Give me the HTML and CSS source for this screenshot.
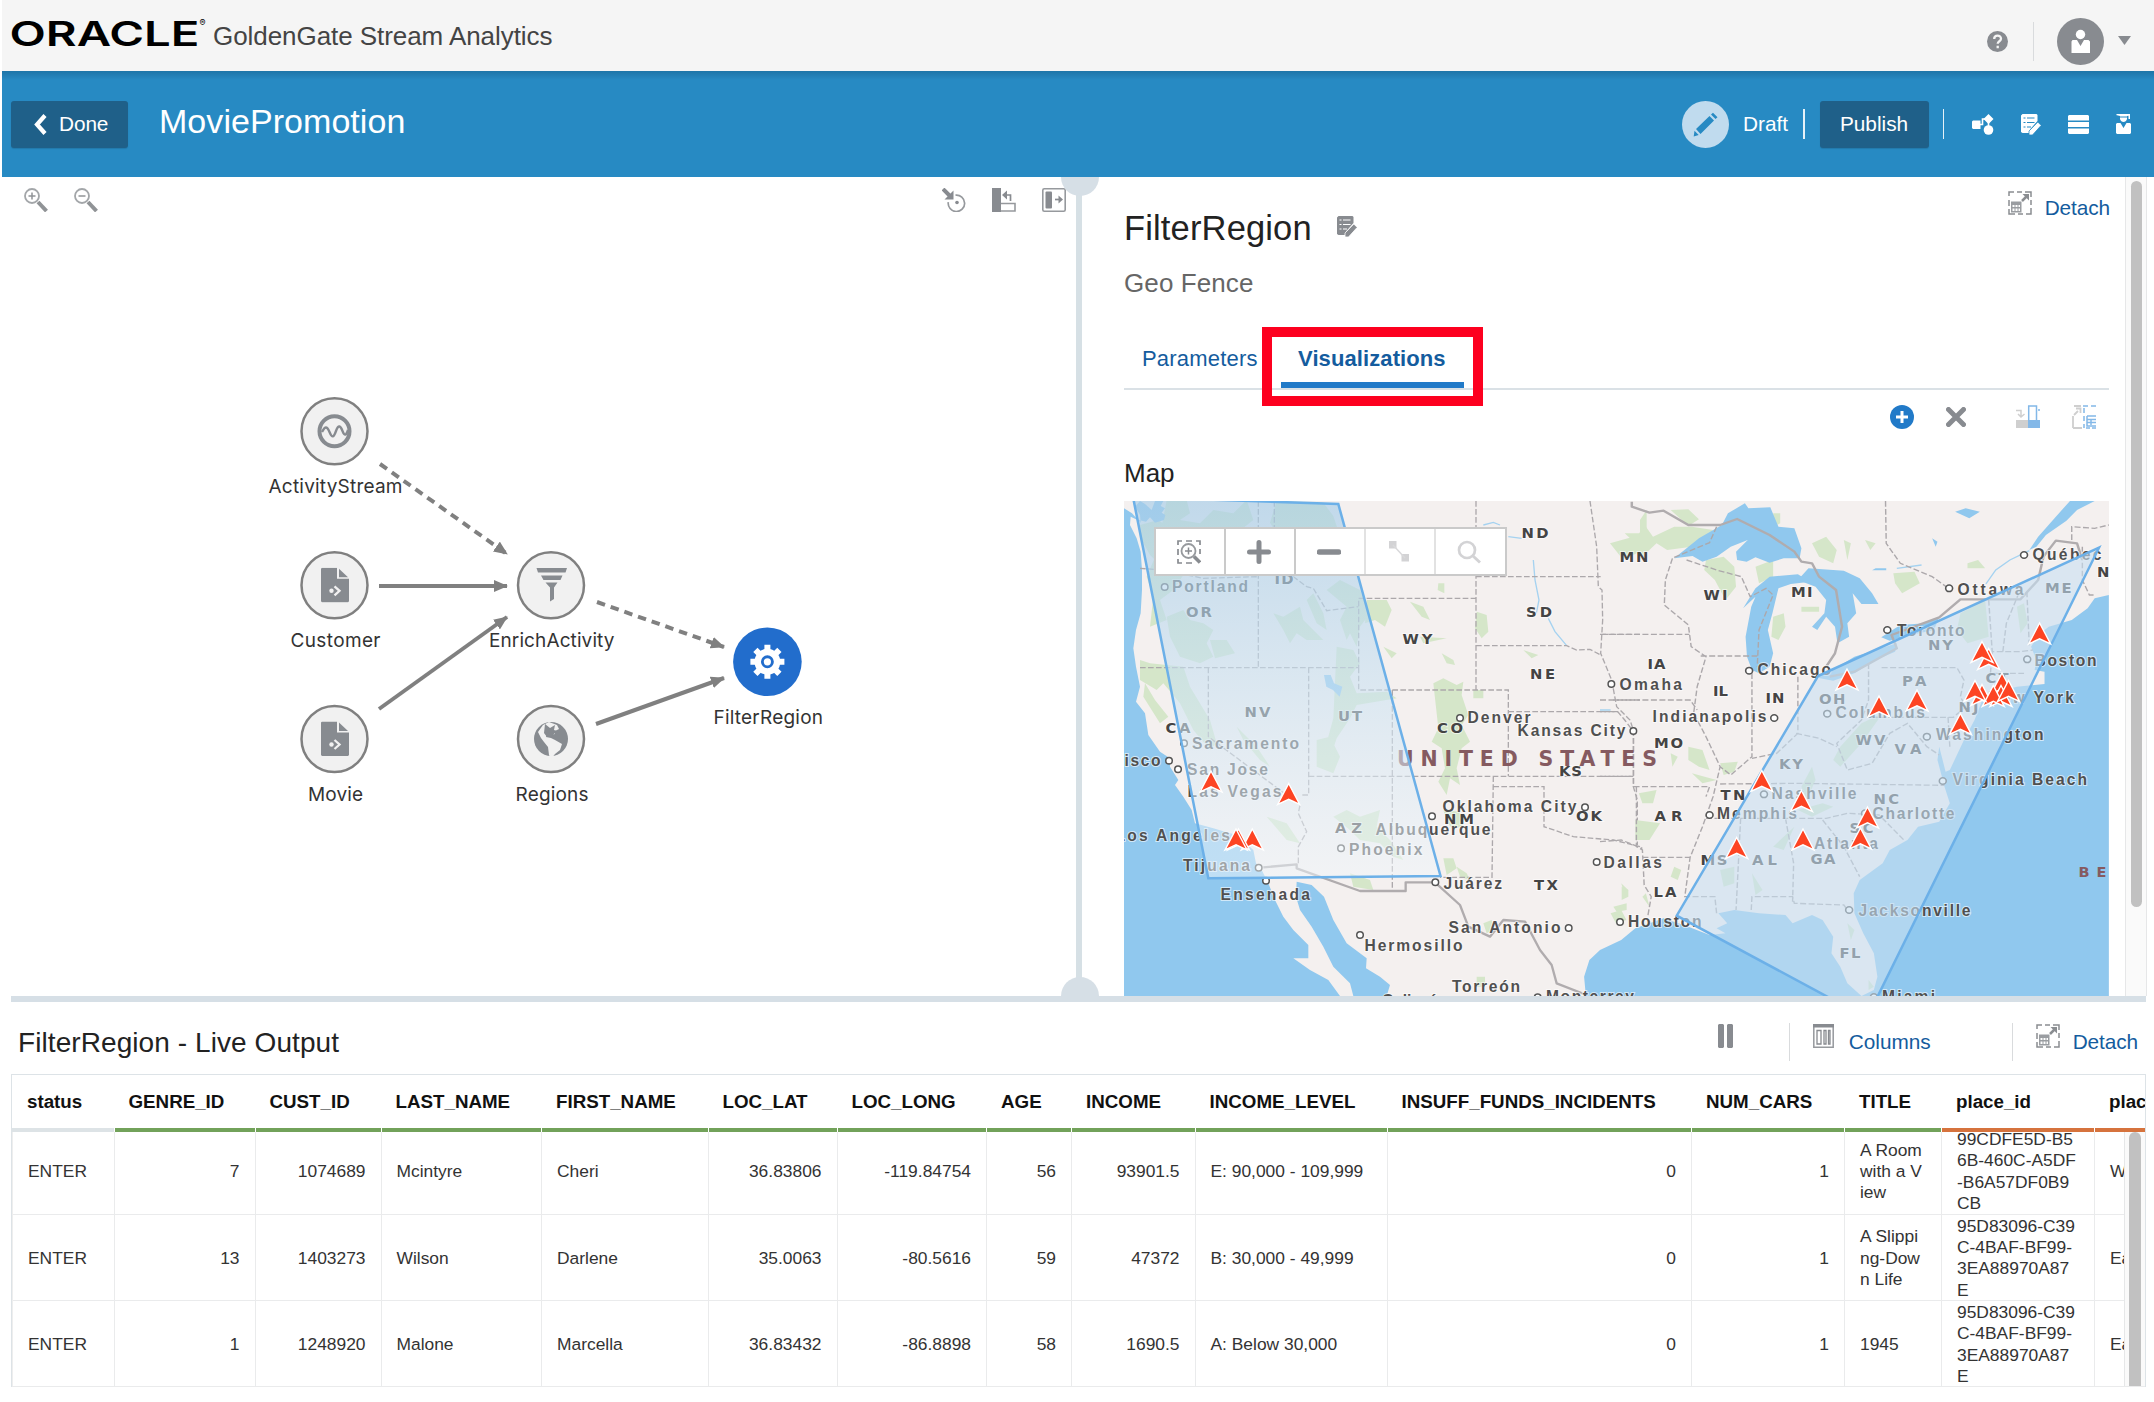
FILE: index.html
```html
<!DOCTYPE html>
<html lang="en">
<head>
<meta charset="utf-8">
<title>MoviePromotion - GoldenGate Stream Analytics</title>
<link rel="stylesheet" href="styles.css">
</head>
<body>
<svg class="defs" width="0" height="0">
  <defs>
    <symbol id="detach" viewBox="0 0 24 24">
      <path d="M1 5V1h5M9 1h5M17 1h6v5M23 9v5M23 17v6h-5M15 23h-5M7 23H1v-5M1 15V9" fill="none" stroke="#8a8d91" stroke-width="1.5"/>
      <path d="M3 10.500h10.500v11H3zM4.500 14v2h2v-2zM7.500 14v2h2v-2zM10.500 14v2h1.500v-2zM4.500 17.500v2.500h2v-2.500zM7.500 17.500v2.500h2v-2.500zM10.500 17.500v2.500h1.500v-2.500z" fill="#9a9da1" fill-rule="evenodd"/>
      <path d="M14 10l5-5" fill="none" stroke="#8a8d91" stroke-width="2.500"/><path d="M14.500 3h6.500v6.500z" fill="#8a8d91"/>
    </symbol>
    <symbol id="edit-list" viewBox="0 0 20 21">
      <path d="M1.500 0h14l1 1v6L9 15.500V19H1.500l-1.500-1V1.500z" fill="currentColor"/>
      <path d="M2.500 4h2M6 4h7.500M2.500 8.500h2M6 8.500h7.500M2.500 13h2M6 13h4" stroke="var(--gap)" stroke-width="1.200"/>
      <path d="M8 21v-4L16.800 8l3.400 3.400L11.500 21z" fill="currentColor" stroke="var(--gap)" stroke-width=".8"/>
    </symbol>
    <symbol id="file" viewBox="0 0 28 35">
      <path d="M1 0h15v11h12v22.500L27 34.500H1L0 33.500V1z" fill="#878b90"/>
      <path d="M18 1v8.500h9z" fill="#878b90"/>
      <circle cx="10.500" cy="23" r="2.200" fill="#f1f1f1"/>
      <path d="M13.500 18.500l5 4.500-5 4.500" fill="none" stroke="#f1f1f1" stroke-width="2.300"/>
    </symbol>
    <path id="pin" d="M0-10.500L11 10.500L0 5.300L-11 10.500Z" fill="#fd4423" stroke="#fff" stroke-width="1.400"/>
    <marker id="arrow" markerUnits="userSpaceOnUse" markerWidth="14" markerHeight="12" refX="13" refY="6" orient="auto"><path d="M0 0l14 6-14 6z" fill="#808080"/></marker>
    <linearGradient id="fence-west" x1="0" y1="0" x2="0" y2="1">
      <stop offset="0" stop-color="#a8cde8" stop-opacity=".68"/>
      <stop offset=".5" stop-color="#cbe2f2" stop-opacity=".6"/>
      <stop offset="1" stop-color="#f0f6fb" stop-opacity=".5"/>
    </linearGradient>
  </defs>
</svg>

<header class="brand-bar">
  <svg class="oracle" width="196" height="34" viewBox="0 0 196 34"><text x="-1.500" y="29" textLength="190" lengthAdjust="spacingAndGlyphs">ORACLE</text><text class="reg" x="188.500" y="9">®</text></svg>
  <h1 class="product">GoldenGate Stream Analytics</h1>
  <div class="user-tools">
    <svg width="21" height="21" viewBox="0 0 21 21"><circle cx="10.500" cy="10.500" r="10.500" fill="#888b90"/><path d="M7.200 8c0-4.500 6.800-4.300 6.800-.3 0 2.600-3.300 2.400-3.300 5M10.700 14.700v2.500" fill="none" stroke="#f5f5f5" stroke-width="2.300"/></svg>
    <i class="rule"></i>
    <svg width="47" height="47" viewBox="0 0 47 47"><circle cx="23.500" cy="23.500" r="23.500" fill="#888b90"/><circle cx="23.500" cy="16.500" r="4.700" fill="#fff"/><path d="M15.500 22h4.500l3.500 6 3.500-6h4.500l1.500 1.500V35H14.500V23.500z" fill="#fff"/></svg>
    <svg class="caret" width="13" height="9" viewBox="0 0 13 9"><path d="M0 0h13L6.500 9z" fill="#888b90"/></svg>
  </div>
</header>

<section class="title-bar">
  <button class="btn done"><svg width="14" height="21" viewBox="0 0 14 21"><path d="M12 1.500L4 10.500l8 9" fill="none" stroke="#fff" stroke-width="4.200"/></svg>Done</button>
  <h2 class="pipeline">MoviePromotion</h2>
  <div class="actions">
    <svg width="47" height="47" viewBox="0 0 47 47"><circle cx="23.500" cy="23.500" r="23.500" fill="#c0dbee"/><path d="M14 28L27.500 15l4.500 4.500L18.500 33z M29 13.500l2-1.800 4.500 4.500-2 1.800z M12.500 29.700l4.200 4.200-5 1.600z" fill="#278ac3"/></svg>
    <span class="draft">Draft</span>
    <i class="rule light"></i>
    <button class="btn publish">Publish</button>
    <i class="rule light"></i>
    <div class="glyphs">
      <svg width="22" height="21" viewBox="0 0 22 21"><path d="M1 6.500h7.500V15H1L0 14V7.500z M16.500 0l5 5-5 5-5-5z" fill="#fff"/><circle cx="16.500" cy="16" r="4.800" fill="#fff"/><path d="M8 10.500h2.500V5h3M16.500 8v5" fill="none" stroke="#fff" stroke-width="1.600"/></svg>
      <svg class="on-blue" width="20" height="21"><use href="#edit-list"/></svg>
      <svg width="21" height="19" viewBox="0 0 21 19"><path d="M1 0h19l1 1v4.500H0V1zM0 7h21v5H0zM0 13.500h21V18l-1 1H1l-1-1z" fill="#fff"/></svg>
      <svg width="15" height="20" viewBox="0 0 15 20"><path d="M0 1l1-1h13v5h-1.500V1.800L11 2v3c-1 4-6 4-7 0V2z" fill="#fff"/><path d="M1 9h3.500l3 5 3-5H14l1 1v9l-1 1H1l-1-1v-9z" fill="#fff"/><path d="M3.500 3h8" stroke="#278ac3"/></svg>
    </div>
  </div>
</section>

<main class="workspace">
  <section class="canvas">
    <div class="canvas-tools">
      <svg width="24" height="24" viewBox="0 0 24 24"><circle cx="8" cy="8" r="7" fill="none" stroke="#a3a6a9" stroke-width="1.800"/><path d="M8 4.500v7M4.500 8h7" stroke="#909396" stroke-width="1.500"/><path d="M14 14l8.500 9" stroke="#909396" stroke-width="4"/></svg>
      <svg width="24" height="24" viewBox="0 0 24 24"><circle cx="8" cy="8" r="7" fill="none" stroke="#a3a6a9" stroke-width="1.800"/><path d="M4.500 8h7" stroke="#909396" stroke-width="1.500"/><path d="M14 14l8.500 9" stroke="#909396" stroke-width="4"/></svg>
      <span class="spacer"></span>
      <svg width="24" height="24" viewBox="0 0 24 24"><path d="M1 1l7 7" stroke="#888b90" stroke-width="4"/><path d="M11.500 2.500V11.500H2.500z" fill="#888b90"/><path d="M13.500 7.200a8.200 8.200 0 1 1-7.200 7" fill="none" stroke="#96999d" stroke-width="1.700"/><circle cx="15" cy="14.500" r="1.800" fill="#888b90"/></svg>
      <svg width="24" height="24" viewBox="0 0 24 24"><path d="M0 0h9v24H0z" fill="#888b90"/><path d="M9 15.500h14V23H9" fill="none" stroke="#96999d" stroke-width="1.600"/><path d="M12 7h6.500v6" fill="none" stroke="#888b90" stroke-width="1.700"/><path d="M10 7l5-4.500v9z" fill="#888b90"/></svg>
      <svg width="24" height="24" viewBox="0 0 24 24"><rect x=".8" y=".8" width="22.400" height="22.400" rx="1.500" fill="none" stroke="#96999d" stroke-width="1.600"/><rect x="3.500" y="3.500" width="6.500" height="17" rx="1" fill="#888b90"/><path d="M13 11.500h5" fill="none" stroke="#888b90" stroke-width="1.700"/><path d="M16.500 7.500l4.500 4-4.500 4z" fill="#888b90"/></svg>
    </div>
    <svg class="diagram" width="640" height="420" viewBox="240 390 640 420">
      <g class="edge">
        <path class="dash" d="M380 464L507 554"/><path d="M379 586H507"/><path d="M379 709L507 617"/>
        <path class="dash" d="M597 602L724 647"/><path d="M596 724L724 678"/>
      </g>
      <g class="node"><circle cx="334.500" cy="431.300" r="33"/><circle cx="334.500" cy="585.300" r="33"/><circle cx="334.500" cy="739" r="33"/><circle cx="551" cy="585.300" r="33"/><circle cx="551" cy="739" r="33"/></g>
      <circle cx="767.400" cy="661.800" r="34.300" fill="#226dcc"/>
      <circle cx="334.500" cy="431.300" r="15" fill="none" stroke="#878b90" stroke-width="4"/>
      <path d="M322 432c3-6 5-6 7.500 0s4 6 6.500-1 4.500-5 6.500 0 3.500 5 5.500-1" fill="none" stroke="#878b90" stroke-width="2.400"/>
      <use href="#file" x="321" y="567.800" width="28" height="35"/>
      <use href="#file" x="321" y="721.500" width="28" height="35"/>
      <path d="M536.500 568h30.500l-1.500 4.500h-27.500zM541 575.500h21.500l-2 4.500h-17zM545.500 582.500h12l-3.500 5V599l-4 2.500v-14z" fill="#878b90"/>
      <circle cx="551" cy="739" r="17" fill="#878b90"/>
      <path d="M543 725l6-3 8 3 2 4-4 2v3l-5 1-3-2-1 4 5 1 4 2 7 4-2 6-5 4-4 5-2-4-1-8-4-5-3-4-3-6z" fill="#f1f1f1"/>
      <path d="M545 724l5 4 5-3-1 5 3 1-5 5-5 1-3-4z" fill="#878b90"/>
      <g fill="none" stroke="#fff"><circle cx="767.400" cy="661.800" r="9.700" stroke-width="6.500"/><path d="M767.400 644.800v5M767.400 673.800v5M750.400 661.800h5M779.400 661.800h5M755.400 649.800l3.500 3.500M775.900 670.300l3.500 3.500M755.400 673.800l3.500-3.500M775.900 653.300l3.500-3.500" stroke-width="6"/></g>
      <circle cx="767.400" cy="661.800" r="3.600" fill="#fff"/>
      <g class="node-label">
        <text x="268.500" y="492.500" textLength="134">ActivityStream</text><text x="290.500" y="646.500" textLength="90">Customer</text><text x="308" y="800.500" textLength="55">Movie</text>
        <text x="489" y="646.500" textLength="125.500">EnrichActivity</text><text x="515.500" y="800.500" textLength="73">Regions</text><text x="713.500" y="723.500" textLength="109.500">FilterRegion</text>
      </g>
    </svg>
  </section>

  <div class="splitter"><i class="grip top"></i><i class="grip bottom"></i></div>

  <section class="details">
    <div class="head">
      <div>
        <h3 class="stage">FilterRegion <svg class="on-white" width="20" height="21"><use href="#edit-list"/></svg></h3>
        <p class="kind">Geo Fence</p>
      </div>
      <a class="link detach"><svg width="24" height="24"><use href="#detach"/></svg>Detach</a>
    </div>
    <nav class="tabs">
      <a class="tab first">Parameters</a>
      <a class="tab active">Visualizations</a>
      <i class="callout"></i>
    </nav>
    <div class="viz-tools">
      <svg width="24" height="24" viewBox="0 0 24 24"><circle cx="12" cy="12" r="12" fill="#217ac8"/><path d="M12 6v12M6 12h12" stroke="#fff" stroke-width="3"/></svg>
      <svg class="remove" width="20" height="20" viewBox="0 0 20 20"><path d="M2.500 2.500l15 15M17.500 2.500l-15 15" stroke="#888b90" stroke-width="5" stroke-linecap="round"/></svg>
      <svg class="merge" width="24" height="24" viewBox="0 0 24 24"><path d="M0 15h12v8H0z" fill="#cfcfcf"/><path d="M12 15h12v8H12z" fill="#83b8e8"/><path d="M12.700 15V1h7.800v14M22 5h2" fill="none" stroke="#83b8e8" stroke-width="1.500"/><path d="M0 5.500h5V12M2 9l3 3 3.500-3" fill="none" stroke="#cfcfcf" stroke-width="1.500"/></svg>
      <svg width="24" height="24" viewBox="0 0 24 24"><path d="M1 23V11M2 1h7M1 23h9M2 10l4-4M4 3.500h4.500V8" fill="none" stroke="#cfcfcf" stroke-width="1.800"/><path d="M11 1h5M19 1h5M12 3v5M12 11v5M12 19v4M14 23h4M20 23h4M15 11v10h9M15 11h9M15 14.500h9M15 17.500h9M19 14v6" fill="none" stroke="#83b8e8" stroke-width="1.500"/></svg>
    </div>
    <h4 class="map-title">Map</h4>
    <div class="map">
      <svg width="985" height="495" viewBox="1124 501 985 495">
        <rect x="1124" y="501" width="985" height="495" fill="#f4f0ef"/>
        <!-- western half -->
        <g transform="translate(1120 480) scale(.33333)">
          <g fill="#d5e6c9">
            <path d="M60 135l55-15 35 25 10 60-30 60-40-40-25-45zM140 60l60 0 10 40-30 20 60 10 40-40 60 10 40-40 20 60-50 40-80 20-50 60-60 90-40 30 20 60-50 20 10-90-20-60 30-70zM470 63l140 5 30 40 20 60-50 40-60-50-50 50-50-80zM140 410l50-20 20 30 40 10 30 20-20 40 20 40-40 20-60-20-30-60zM270 480l50 0 25 40-60 15zM190 560l20 60 60 100 20 70-20 20-50-60-40-80-50-60-40-60zM60 540l30 10 40 60-20 20-50-30zM75 610l30 50 40 50-25 20-50-80zM460 400l30 10 50-30 10 40 60 60-50 0-30-20-20 30-20-40zM560 360l20-20 30 60 10 50-30-20zM620 330l40-30 60 30 30 70-30 40-10 60-20-40-10 20-20-60 20-40zM650 500l50 10 20 40-30 40 20 50 90-5 30 20-120 20-20 40-40 60-20 60-20-10 30-110zM590 780l40-10 30 60-20 50-50-20z"/>
            <path d="M740 360h60l15 30-20 50-30-20-30 10zM870 365l40 15 20 40-25-10zM955 310l18 0 0 30-20-10zM1070 395l30 10 5 50-20 20-20-30zM900 470l80 5-70 15zM965 520l35 20 5 15-25-5zM790 500l40 20-15 15zM1060 630h30v25h-30zM940 610l30-15 40 20 20-10-5 40 20 60-20 30 25 50-25 20-15 60 10 50-30-20-10 50-25-40 20-40-10-60-30-20 20-40zM970 990l50 5 10 40-30 15-20-25zM970 1135h30l10 30-30 20zM640 1010l40-20 40 20 60-20-10 50 40 40 40 60-30-10-40-40-60-10-30-30zM690 1180l60 20 10 30-60-10zM1010 1160l30 20 10 20-30-10zM440 1010l60 20 40 60-40-10zM1070 1490h25v30h-25zM1505 1220l20 10 0 20-20 10zM1480 1280l40-10 0 20-30 5zM1470 190l70-20 20 10v-60l20-30v150l-30-20-40 20zM1210 510l45 15-20 10zM1090 1330l25-10 5 30-20 10zM350 740l60 60 40 60-30-20-50-60z"/>
          </g>
          <g fill="#90c8ee">
            <path d="M12 85L36 100L62 128L60 104L45 80L60 63L75 72L95 90L105 63H130L122 78L135 85L125 98L136 105L132 120L105 128L90 112L78 125L48 118L32 110L30 135L50 175L62 215L66 270L66 330L62 400L48 450L40 505L48 560L60 620L48 665L75 700L85 765L120 815L150 835L150 860L175 900L165 915L190 950L215 990L225 1030L280 1045L330 1060L350 1065L400 1110L408 1150L425 1170L445 1210L465 1260L490 1310L520 1350L565 1395L565 1435L520 1435L570 1470L625 1500L660 1548H12Z"/>
            <path d="M530 1205L575 1215L612 1250L640 1320L680 1390L740 1435L738 1465L780 1490L810 1515L800 1548H700L690 1510L640 1460L610 1400L575 1340L540 1290L528 1250Z"/>
            <path d="M612 585l20 0 10 25 25 10-8 30-20-20-20-10z"/>
          </g>
          <path class="river" d="M1090 135l30-8 20 8M1165 170l40 5M1240 240l5 60 12 60-8 40M1285 415l20 40 35 42"/>
          <path class="state" d="M60 265l70 5 120 25 165-5M415 63V563M463 63V180L520 290L560 320L580 325L620 392L715 380M60 563H716V360M716 355H1068M716 563V630H1165V889M1068 63V630M1068 290H1442M1068 497H1340L1370 510L1410 508L1442 525M1165 695H1500M566 563V945L540 945M566 889H1540M817 630V1232M265 563V770L540 975L535 1000L560 1055L535 1100V1150M1120 889L1116 1192H960M1120 920H1272V1040L1360 1070L1480 1080L1560 1100M1410 63L1430 200L1435 320L1446 330L1448 420L1442 520L1475 600L1490 680L1530 720L1540 750V920L1552 960V1095M1448 463H1560M1480 660H1560"/>
          <path class="country" d="M430 1162L530 1153V1165L720 1233H857V1207H945L1020 1275L1045 1340L1110 1370L1150 1320L1215 1325L1260 1410L1295 1455L1310 1510L1400 1545"/>
        </g>
        <!-- eastern half -->
        <g transform="translate(1600 480) scale(.35336 .33333)">
          <g fill="#d5e6c9">
            <path d="M70 160l40 0 20-20 20 30 60-30 50 0 60 10-60 50-70 10-30-20-30 30zM200 90l50-2 30 30-30 20zM300 240l50-10 30 30 5 60-30 40-30-60-30-30zM440 260l50-20 0 50-40 20zM490 410l30-10 5 40-20 40-20-10zM570 380h50v15h-50zM500 180l60 0 5 60-30-40zM600 190l40-20 30 40-10 40-40-20zM750 180l30 10-15 20zM1040 250l30-10 20 25-50 0zM830 280l60-5 15 35-50 30-20-30zM1020 400l70-40 10 110-60 20-30-40zM490 100l20 0 0 30-20 10zM690 180l20 10-10 50z"/>
            <path d="M200 820l20 10-15 30zM250 800l40 10 20 60-30-10-30-20zM340 850l50-5-10 30-30 10zM260 880l70 20-40 10zM110 940l50-10-10 40-30 0zM100 1020l70 10-30 50-40 0zM60 1210l20 20-10 15zM30 1300l30-10 15 30-30 10zM120 1250l10-10 10 40zM210 1160l20 10-10 30-20-10zM560 990l70-20 30 10-60 30zM660 840l20-40 60-70 60-30-60 90-60 70zM570 920l30-60 10 40-25 60zM490 1100l60-60-30 70zM1180 380l20-10 10 60-20 30zM340 1170l40-10 0 50-30 10zM700 1330l20 20-10 30zM760 1500l15 20-15 10zM430 1180l30 50-20 15z"/>
          </g>
          <g fill="#90c8ee">
            <path d="M210 235L280 175L345 135L362 100L410 70L420 85L482 82L505 140L550 145L570 205L565 235L520 235L480 248L440 232L415 245L388 240L385 215L418 180L370 200L330 230L290 245L262 228Z"/>
            <path d="M405 385L440 325L480 290L560 283L595 305L540 312L505 325L488 400L475 450L490 520L480 560L450 580L430 570L416 530L412 470L428 380L440 350Z"/>
            <path d="M590 265L690 272L735 295L770 340L788 372L740 372L715 340L725 400L700 430L705 470L672 490L665 440L640 410L615 450L600 440L635 400L640 360L610 320L560 300Z"/>
            <path d="M600 590L650 575L720 530L780 510L840 490L835 515L780 540L720 580L660 602Z M796 472L850 435L920 430L960 412L945 450L880 465L820 482Z"/>
            <path d="M1400 63H1330L1290 110L1240 170L1215 210L1235 200L1262 165L1320 122L1350 90Z M1005 95l30-10 40 10-30 20zM940 175l15 10-5 15zM780 265l30 0 0 6h-40z"/>
            <path d="M1440 345L1400 355L1380 385L1335 420L1270 440L1240 465L1220 500L1235 540L1230 570L1258 575V612L1180 620L1110 640L1080 665L1060 720L1030 780L990 870L978 875L960 800L955 840L975 920L990 970L960 1025L900 1040L870 1080L820 1110L800 1150L735 1200L718 1240L720 1300L745 1360L775 1420L785 1490L775 1530L740 1548L700 1510L680 1460L655 1420L660 1370L630 1320L600 1305L545 1330L525 1305L450 1300L380 1290L335 1300L360 1330L330 1345L355 1360L310 1365L250 1340L180 1315L100 1345L60 1380L0 1410L-30 1440L-45 1490L-40 1548H1440Z"/>
          </g>
          <path class="river" d="M1215 212L1160 240L1120 270L1092 312M840 265l70-10M0 690h30"/>
          <path class="state" d="M0 463H253M205 235L185 300L182 375L250 435L258 500L300 530L275 620L265 700L300 770L340 860L320 950L290 1040L255 1132L240 1250H325L330 1300M210 232L310 188L330 140M245 240L330 270L400 290L425 350L470 325L490 345L450 450L445 560M285 528H445M430 580V830L370 885L340 860M0 660H255L275 690M0 695H50L70 720L95 755V920M0 889H95M95 920H310L300 950M103 920V1100L120 1110L125 1215L145 1250L135 1310M120 1132H255M0 1085L60 1080L120 1105M340 912L560 910L975 916M560 590V760L500 820L430 835M760 550V660L740 720L670 790L700 870L770 850L820 760L870 730L925 800L960 825M797 563H1010L1030 600L1020 650L1035 680L1000 712H760M555 760L620 775L670 800M300 1015H640L700 1000L790 1005L860 1080M398 1015L385 1290M525 1015L548 1150L545 1265M428 1290L430 1250H545L550 1270L690 1275L700 1290M630 1020L690 1100L735 1190M1100 360L1110 515H1190L1225 510M1140 515L1150 430L1185 340M1208 335L1215 500M1365 200V300L1385 345H1398M808 63L810 190L850 250L940 290L980 320M1335 180V140L1400 145L1440 135M985 712L990 800M1110 515L1105 580H1200"/>
          <path class="country" d="M90 65L90 80L140 98L180 92L250 135L340 135L388 117L480 165L550 215L570 245L600 250L620 290L668 330L685 440L665 520L640 560M650 590L720 575L840 505L825 465L960 412L1020 358H1190L1240 300L1255 230L1290 182L1350 190L1365 240"/>
        </g>
        <g class="city">
          <text x="1172" y="592.300" textLength="76">Portland</text><text x="1467.500" y="723.300" textLength="63">Denver</text><text x="1517.500" y="736" textLength="108">Kansas City</text><text x="1192" y="748.700" textLength="107">Sacramento</text><text x="1124.500" y="765.700" textLength="36">isco</text><text x="1187" y="774.700" textLength="81">San Jose</text><text x="1187.500" y="797.300" textLength="94">Las Vegas</text><text x="1115.500" y="841" textLength="114.500">Los Angeles</text><text x="1375.500" y="835" textLength="115">Albuquerque</text><text x="1349" y="854.700" textLength="73.500">Phoenix</text><text x="1183" y="871.300" textLength="67">Tijuana</text><text x="1220.500" y="900" textLength="89.500">Ensenada</text><text x="1443.500" y="888.700" textLength="58.500">Juárez</text><text x="1442.500" y="812.300" textLength="134">Oklahoma City</text><text x="1448.500" y="933.300" textLength="112">San Antonio</text><text x="1364.500" y="951" textLength="98">Hermosillo</text><text x="1452" y="992" textLength="68">Torreón</text><text x="1546" y="1002" textLength="88">Monterrey</text><text x="1382" y="1006" textLength="65">Culiacán</text><text x="1603.500" y="867.700" textLength="58.500">Dallas</text>
          <text x="1619.500" y="690" textLength="62.500">Omaha</text><text x="1757.500" y="675" textLength="73.500">Chicago</text><text x="1652.500" y="721.700" textLength="114">Indianapolis</text><text x="1771.500" y="799" textLength="85">Nashville</text><text x="1717" y="818.700" textLength="80">Memphis</text><text x="1872.500" y="818.700" textLength="82">Charlotte</text><text x="1814" y="848.700" textLength="64">Atlanta</text><text x="1628" y="927.300" textLength="73.500">Houston</text><text x="1858.500" y="915.700" textLength="112">Jacksonville</text><text x="1882" y="1001.500" textLength="53">Miami</text><text x="2032.500" y="560.300" textLength="69">Québec</text><text x="1957.500" y="595" textLength="66">Ottawa</text><text x="1897" y="636" textLength="67.500">Toronto</text><text x="2034.500" y="665.700" textLength="62">Boston</text><text x="1988" y="702.700" textLength="86">New York</text><text x="1835.500" y="718.300" textLength="89.500">Columbus</text><text x="1936" y="740.300" textLength="107.500">Washington</text><text x="1952.500" y="785.300" textLength="134.500">Virginia Beach</text>
        </g>
        <g class="code">
          <text x="1186" y="617" textLength="26">OR</text><text x="1274.500" y="583.700" textLength="19">ID</text><text x="1521.500" y="538" textLength="27">ND</text><text x="1526" y="617" textLength="26">SD</text><text x="1402.500" y="643.700" textLength="30">WY</text><text x="1530" y="679" textLength="25">NE</text><text x="1165.500" y="733.300" textLength="25">CA</text><text x="1244.500" y="717" textLength="26">NV</text><text x="1338" y="721.300" textLength="24">UT</text><text x="1437" y="733.300" textLength="26">CO</text><text x="1559" y="776" textLength="23">KS</text><text x="1335" y="833" textLength="27">AZ</text><text x="1534" y="890" textLength="24">TX</text><text x="1444" y="824.300" textLength="30">NM</text><text x="1576" y="821.300" textLength="26">OK</text>
          <text x="1619.500" y="561.700" textLength="29">MN</text><text x="1703.500" y="599.700" textLength="24">WI</text><text x="1791" y="596.700" textLength="21.500">MI</text><text x="1647.500" y="669" textLength="18">IA</text><text x="1713" y="695.700" textLength="15">IL</text><text x="1765.500" y="702.700" textLength="19">IN</text><text x="1654" y="747.700" textLength="29">MO</text><text x="1779" y="768.700" textLength="24">KY</text><text x="1720.500" y="799.700" textLength="25">TN</text><text x="1873.500" y="803.700" textLength="25.500">NC</text><text x="1654.500" y="821.300" textLength="28">AR</text><text x="1849.500" y="833.300" textLength="24">SC</text><text x="1810.500" y="864.300" textLength="25">GA</text><text x="1700.500" y="865.300" textLength="27">MS</text><text x="1752" y="865.300" textLength="25">AL</text><text x="1653.500" y="896.700" textLength="23">LA</text><text x="1839.500" y="958.300" textLength="21">FL</text><text x="2045" y="592.700" textLength="26.500">ME</text><text x="2097" y="577.300">NB</text><text x="1928" y="650" textLength="25">NY</text><text x="1985.500" y="683.300" textLength="23">CT</text><text x="1902" y="686.300" textLength="24.500">PA</text><text x="1819" y="703.700" textLength="26.500">OH</text><text x="1958.500" y="711.700" textLength="20">NJ</text><text x="1855.500" y="744.700" textLength="30">WV</text><text x="1894.500" y="753.700" textLength="27">VA</text>
        </g>
        <text class="nation" x="1397" y="765.700" textLength="260">UNITED STATES</text>
        <text class="nation small" x="2078.500" y="877.300" textLength="46">BER</text>
        <g class="dots" transform="translate(1120 480) scale(.33333)">
          <path id="dw" d="M134 321h.1M147 842h.1M174 868h.1M192 790h.1M1020 714h.1M1540 753h.1M1395 982h.1M936 1009h.1M663 1105h.1M416 1163h.1M438 1202h.1M946 1207h.1M720 1365h.1M1346 1344h.1M1500 1326h.1M1430 1146h.1M1474 612h.1M1253 1552h.1"/><use class="core" href="#dw"/>
        </g>
        <g class="dots" transform="translate(1600 480) scale(.35336 .33333)">
          <path id="de" d="M422 572h.1M493 714h.1M813 450h.1M988 325h.1M1200 225h.1M1209 538h.1M643 701h.1M925 770h.1M970 903h.1M464 943h.1M310 1005h.1M750 1000h.1M705 1290h.1M775 1551h.1"/><use class="core" href="#de"/>
        </g>
        <g class="fence">
          <path d="M1133 497L1338.300 504L1440.500 876L1208.300 878.300Z" fill="url(#fence-west)"/>
          <path d="M2099 547.700L1818 676L1676.700 915.700L1867 1018Z" fill="#c8e0f2" fill-opacity=".6"/>
        </g>
        <use href="#pin" x="1211" y="781.500"/><use href="#pin" x="1288.700" y="794"/><use href="#pin" x="1252.300" y="839.500"/><use href="#pin" x="1238.500" y="839.500"/><use href="#pin" x="1236" y="839.500"/>
        <use href="#pin" x="2039.600" y="633.500"/><use href="#pin" x="1988.700" y="659"/><use href="#pin" x="1982" y="652"/><use href="#pin" x="1847" y="679.500"/><use href="#pin" x="1879" y="706.500"/><use href="#pin" x="1917" y="700.500"/><use href="#pin" x="2002" y="683.500"/><use href="#pin" x="1982" y="695"/><use href="#pin" x="2001" y="696"/><use href="#pin" x="1993.300" y="696"/><use href="#pin" x="2008.500" y="691"/><use href="#pin" x="1975" y="691"/><use href="#pin" x="1960.400" y="724"/><use href="#pin" x="1761.800" y="781"/><use href="#pin" x="1801.400" y="801"/><use href="#pin" x="1860.400" y="838.500"/><use href="#pin" x="1867.500" y="817.500"/><use href="#pin" x="1803" y="839.500"/><use href="#pin" x="1736.700" y="848"/>
      </svg>
      <div class="map-tools">
        <span><svg width="24" height="24" viewBox="0 0 24 24"><path d="M1 5V1h4M9 1h6M19 1h4v4M1 9v6M23 9v5M1 19v4h4M9 23h6" fill="none" stroke="#888b90" stroke-width="1.700"/><circle cx="11.500" cy="11" r="7" fill="none" stroke="#96999d" stroke-width="1.800"/><path d="M11.500 7.500v7M8 11h7" stroke="#888b90" stroke-width="1.500"/><path d="M17 16.500l6 6" stroke="#888b90" stroke-width="3.500"/></svg></span>
        <span><svg width="24" height="24" viewBox="0 0 24 24"><path d="M12 2.500v19M2.500 12h19" stroke="#888b90" stroke-width="5" stroke-linecap="round"/></svg></span>
        <span><svg width="24" height="24" viewBox="0 0 24 24"><path d="M2.500 12h19" stroke="#888b90" stroke-width="5.500" stroke-linecap="round"/></svg></span>
        <span><svg width="24" height="24" viewBox="0 0 24 24"><path d="M2 1h7.500v7.500H2zM14.500 14H22v7.500h-7.500z" fill="#d3d3d5"/><path d="M6 5l12 13" stroke="#d9d9db" stroke-width="1.500"/></svg></span>
        <span><svg width="24" height="24" viewBox="0 0 24 24"><circle cx="10" cy="10" r="8" fill="none" stroke="#d3d3d5" stroke-width="2.700"/><path d="M16 16l7 6.500" stroke="#d3d3d5" stroke-width="3"/></svg></span>
      </div>
    </div>
  </section>
  <div class="scroll"><i></i></div>
</main>

<section class="output">
  <div class="output-head">
    <h3>FilterRegion - Live Output</h3>
    <svg class="pause" width="15" height="24" viewBox="0 0 15 24"><path d="M0 1l1-1h4l1 1v22l-1 1H1l-1-1zM9 1l1-1h4l1 1v22l-1 1h-4l-1-1z" fill="#888b90"/></svg>
    <i class="rule"></i>
    <a class="link columns"><svg width="21" height="24" viewBox="0 0 21 24"><path d="M.8.800h19.400v22.400H.8z" fill="none" stroke="#96999d" stroke-width="1.500"/><path d="M0 0h21v3.500H0z" fill="#888b90"/><path d="M4 6.500h4V20H4zM11 6.500h2V20h-2zM15.500 6.500h1.500V20h-1.500z" fill="none" stroke="#888b90" stroke-width="1.300"/></svg>Columns</a>
    <i class="rule"></i>
    <a class="link"><svg width="24" height="24"><use href="#detach"/></svg>Detach</a>
  </div>
  <div class="grid">
    <div class="row header">
      <b class="plain">status</b><b>GENRE_ID</b><b>CUST_ID</b><b>LAST_NAME</b><b>FIRST_NAME</b><b>LOC_LAT</b><b>LOC_LONG</b><b>AGE</b><b>INCOME</b><b>INCOME_LEVEL</b><b>INSUFF_FUNDS_INCIDENTS</b><b>NUM_CARS</b><b>TITLE</b><b class="geo">place_id</b><b class="geo">place_name</b>
    </div>
    <div class="rows">
      <div class="records">
        <div class="row"><span>ENTER</span><span class="n">7</span><span class="n">1074689</span><span>Mcintyre</span><span>Cheri</span><span class="n">36.83806</span><span class="n">-119.84754</span><span class="n">56</span><span class="n">93901.5</span><span>E: 90,000 - 109,999</span><span class="n">0</span><span class="n">1</span><span>A Room<br>with a V<br>iew</span><span>99CDFE5D-B5<br>6B-460C-A5DF<br>-B6A57DF0B9<br>CB</span><span>West</span></div>
        <div class="row"><span>ENTER</span><span class="n">13</span><span class="n">1403273</span><span>Wilson</span><span>Darlene</span><span class="n">35.0063</span><span class="n">-80.5616</span><span class="n">59</span><span class="n">47372</span><span>B: 30,000 - 49,999</span><span class="n">0</span><span class="n">1</span><span>A Slippi<br>ng-Dow<br>n Life</span><span>95D83096-C39<br>C-4BAF-BF99-<br>3EA88970A87<br>E</span><span>East</span></div>
        <div class="row"><span>ENTER</span><span class="n">1</span><span class="n">1248920</span><span>Malone</span><span>Marcella</span><span class="n">36.83432</span><span class="n">-86.8898</span><span class="n">58</span><span class="n">1690.5</span><span>A: Below 30,000</span><span class="n">0</span><span class="n">1</span><span>1945</span><span>95D83096-C39<br>C-4BAF-BF99-<br>3EA88970A87<br>E</span><span>East</span></div>
      </div>
      <div class="scroll grid-scroll"><i></i></div>
    </div>
  </div>
</section>
</body>
</html>
```

FILE: styles.css
```css
* { box-sizing: border-box; }
body { margin: 0; width: 2154px; height: 1402px; overflow: hidden; background: #fff; color: #222; font-family: "Liberation Sans", Arial, sans-serif; }
h1, h2, h3, h4, p { margin: 0; font-weight: 400; }
svg { display: block; flex: none; }
.defs { position: absolute; }
.rule { width: 1px; background: #d9dbdd; flex: none; }

/* brand bar */
.brand-bar { display: flex; align-items: center; height: 71px; margin-left: 2px; padding-left: 9px; background: #f5f5f5; }
.oracle { overflow: visible; margin-bottom: 3px; font: 600 34.500px Inter, sans-serif; }
.oracle .reg { font-size: 9px; font-weight: 400; }
.product { margin: 1px 0 0 6px; font-size: 26px; letter-spacing: -.06px; color: #444; }
.user-tools { display: flex; align-items: center; margin: 12px 23px 0 auto; }
.user-tools .rule { height: 39px; margin: 0 23px 0 25px; }
.caret { margin: -2px 0 0 14px; }

/* pipeline bar */
.title-bar { display: flex; align-items: center; height: 106px; margin-left: 2px; padding: 0 23px 0 9px; background: linear-gradient(rgba(0, 40, 70, .22), rgba(0, 40, 70, 0) 9px) #278ac3; color: #fff; }
.btn { height: 47px; border: 0; border-radius: 3px; padding: 0; background: #1f6089; box-shadow: 0 1px 1px rgba(0, 0, 0, .12); color: #fff; font: 20.800px "Liberation Sans", Arial, sans-serif; }
.done { display: flex; align-items: center; gap: 12px; width: 117px; padding-left: 22px; letter-spacing: -.1px; }
.pipeline { margin: -5px 0 0 31px; font-size: 34px; letter-spacing: .05px; }
.actions { display: flex; align-items: center; margin-left: auto; }
.draft { width: 46px; margin-left: 14px; font-size: 20.800px; }
.rule.light { height: 30px; width: 1.500px; background: #e5f1f8; }
.draft + .rule { margin: 0 15px 0 14px; }
.publish { width: 109px; }
.publish + .rule { margin: 0 28px 0 14px; }
.glyphs { display: flex; align-items: center; gap: 27px; }
.on-blue { --gap: #278ac3; color: #fff; }
.on-white { --gap: #fff; color: #888b90; }

/* workspace */
.workspace { display: flex; height: 819px; }
.canvas { width: 1076px; padding: 11px 10px 0 24px; }
.canvas-tools { display: flex; gap: 26px; }
.canvas-tools .spacer { flex: 1; }
.diagram { margin: 178px 0 0 216px; }
.edge path { fill: none; stroke: #808080; stroke-width: 4; marker-end: url(#arrow); }
.edge .dash { stroke-dasharray: 8.500 6; }
.node circle { fill: #f1f1f1; stroke: #808080; stroke-width: 2.500; }
.node-label { font: 19px Inter, sans-serif; fill: #333; }
.splitter { position: relative; width: 6px; background: #d6e0e5; overflow: visible; flex: none; }
.grip { position: absolute; left: -15.500px; width: 38px; height: 19px; background: #d6dfe6; }
.grip.top { top: 0; border-radius: 0 0 19px 19px; }
.grip.bottom { bottom: 0; border-radius: 19px 19px 0 0; }

.details { width: 1043px; padding: 0 16px 0 42px; flex: none; overflow: hidden; }
.head { display: flex; justify-content: space-between; padding-top: 31px; }
.stage { display: flex; align-items: center; gap: 25px; line-height: 40px; font-size: 34.500px; letter-spacing: .15px; }
.stage svg { margin-top: -4px; }
.kind { margin-top: 20px; line-height: 30px; font-size: 26px; letter-spacing: .1px; color: #666; }
.link { display: flex; gap: 13px; line-height: 30px; font-size: 20.800px; letter-spacing: -.1px; color: #145c9e; }
.detach { margin: -14px -1px 0 0; line-height: 28px; }
.detach svg { margin-top: -3px; }
.tabs { position: relative; display: flex; gap: 7px; margin-top: 37px; height: 55px; border-bottom: 2px solid #dae1e6; }
.tab { width: 183px; padding: 0 17px; line-height: 47px; font-size: 22px; letter-spacing: .1px; color: #145c9e; }
.tab.first { width: 150px; padding-left: 18px; letter-spacing: .2px; }
.tab.active { font-weight: 700; border-bottom: 6px solid #217ac8; }
.callout { position: absolute; left: 138px; top: -8px; width: 221px; height: 79px; border: 10px solid #fd001f; }
.viz-tools { display: flex; justify-content: flex-end; align-items: center; height: 54px; padding-right: 13px; }
.remove { margin: 0 50px 0 32px; }
.merge { margin-right: 32px; }
.map-title { margin: 14px 0 13px; line-height: 30px; font-size: 26px; }

.map { position: relative; height: 495px; }
.state { fill: none; stroke: #aca8ab; stroke-width: 4; stroke-dasharray: 17 7; }
.country { fill: none; stroke: #b0acae; stroke-width: 7; stroke-linejoin: round; }
.river { fill: none; stroke: #a5d2f0; stroke-width: 4; }
.city { font: 700 15.600px "Liberation Sans", sans-serif; fill: #505050; stroke: #fff; stroke-width: 2px; stroke-opacity: .6; paint-order: stroke; }
.code { font: 700 14.800px "DejaVu Sans", sans-serif; fill: #444; stroke: #fff; stroke-width: 2px; stroke-opacity: .6; paint-order: stroke; }
.nation { font: 700 20.500px "DejaVu Sans", sans-serif; fill: #855a60; }
.nation.small { font-size: 14.500px; }
.dots { stroke: #555; stroke-width: 24; stroke-linecap: round; fill: none; }
.dots .core { stroke: #fff; stroke-width: 15; }
.fence path { stroke: #6cb0e8; stroke-width: 2.500; }
.map-tools { position: absolute; left: 29.500px; top: 26px; display: flex; width: 353px; height: 49px; border: 2px solid #cacaca; background: #fff; }
.map-tools span { display: flex; flex: 1; align-items: center; justify-content: center; padding-right: 2px; }
.map-tools span + span { border-left: 2px solid #cacaca; }
.map-tools span:nth-child(n+4) { border-color: #e2e2e2; }

.scroll { width: 22px; padding: 4px 5px 0; background: #fafafa; border: solid #e6e7e8; border-width: 0 1px; }
.scroll i { display: block; width: 11px; height: 726px; border-radius: 6px; background: #c1c1c1; }

/* live output */
.output { margin-left: 11px; width: 2135px; border-top: 6px solid #d6dfe6; }
.output-head { display: flex; height: 72px; padding: 21px 8px 0 7px; }
.output-head h3 { margin: 3px auto 0 0; line-height: 34px; font-size: 28px; letter-spacing: .08px; }
.output-head svg { margin-top: 1px; }
.output-head .link { padding-top: 4px; }
.output-head .link svg { margin-top: -3px; }
.output-head .rule { height: 38px; margin-left: 56px; margin-right: 23px; }
.output-head .columns { width: 143px; gap: 15px; letter-spacing: 0; }
.grid { height: 313px; border: 1px solid #dde3e7; border-width: 1px 1px 0; overflow: hidden; }
.row { display: grid; grid-template-columns: 102.500px 141px 126px 160.500px 166.500px 129px 149.500px 85px 123.500px 192px 304.500px 153px 97px 153px 60px; }
.header { height: 57px; }
.header b { padding: 11px 0 0 14px; line-height: 32px; height: 57px; font-size: 18.750px; color: #111; white-space: nowrap; border-bottom: 4px solid #72a25a; margin-right: 1px; }
.header .plain { padding-left: 15px; border-color: #dde3e6; }
.header .geo { border-color: #d6733d; }
.rows { display: flex; height: 255px; overflow: hidden; border-bottom: 1px solid #eaebec; }
.records { width: 2112px; margin-top: -4px; overflow: hidden; flex: none; border-left: 1px solid #eee; }
.records .row { height: 86.500px; margin-left: -1px; }
.records span { display: flex; align-items: center; height: 86.500px; padding: 2px 15px 0; line-height: 21.300px; font-size: 17.400px; color: #333; white-space: nowrap; border: solid #eaebec; border-width: 0 1px 1px 0; }
.records span:first-child { padding-left: 16px; }
.records .n { justify-content: flex-end; }
.grid-scroll { flex: 1; padding: 0 4px; }
.grid-scroll i { width: 12px; height: 280px; }
```
